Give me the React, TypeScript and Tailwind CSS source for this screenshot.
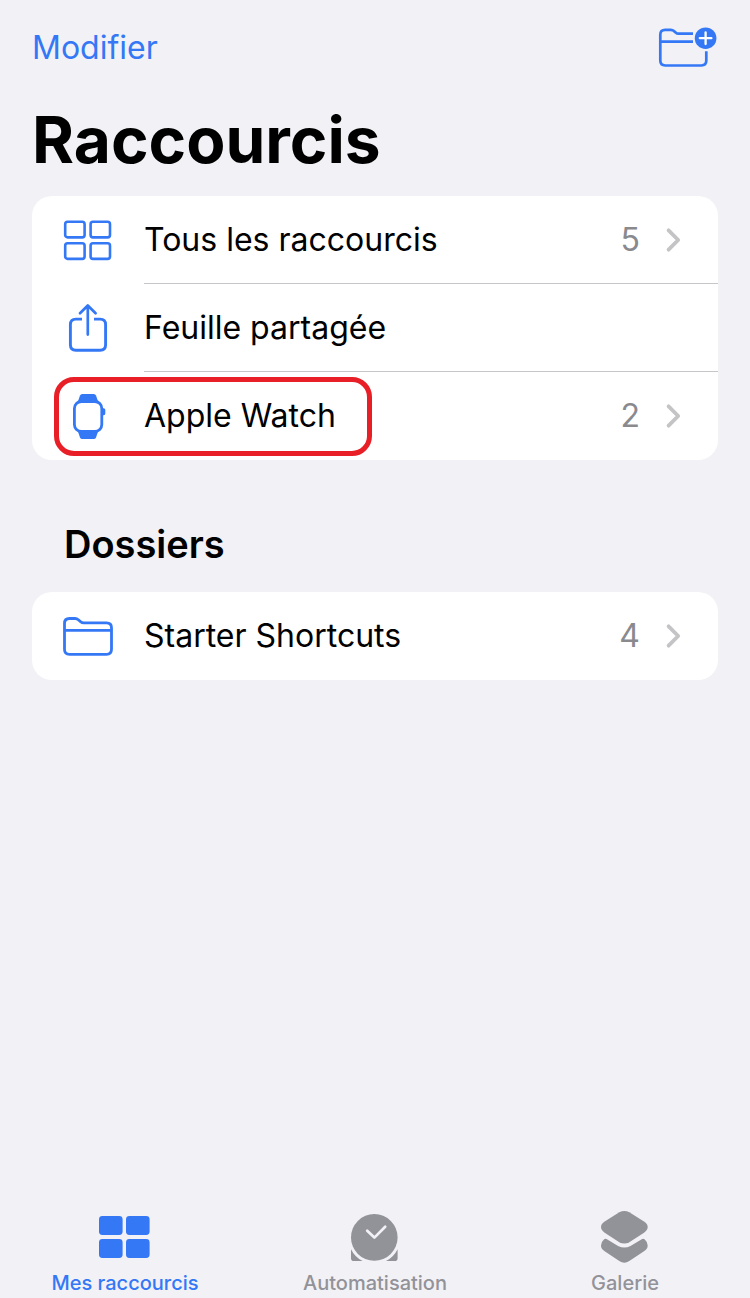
import React from 'react';

type IconProps = { className?: string };

const iconClass = 'h-14 w-14 shrink-0';

const GridIcon = ({ className = iconClass }: IconProps) => (
  <svg viewBox="0 0 56 56" className={className} fill="none" stroke="currentColor" strokeWidth="2.6" aria-hidden="true">
    <rect x="5.2" y="9.8" width="19.4" height="15.6" rx="2.4" />
    <rect x="30.6" y="9.8" width="19.4" height="15.6" rx="2.4" />
    <rect x="5.2" y="31.3" width="19.4" height="15.6" rx="2.4" />
    <rect x="30.6" y="31.3" width="19.4" height="15.6" rx="2.4" />
  </svg>
);

const ShareIcon = ({ className = iconClass }: IconProps) => (
  <svg viewBox="0 0 56 56" className={className} fill="none" stroke="currentColor" strokeWidth="2.9" aria-hidden="true">
    <path d="M22 19.1h-6.1q-5.5 0-5.5 5.5v20.2q0 5.5 5.5 5.5h24.2q5.5 0 5.5-5.5V24.6q0-5.5-5.5-5.5H34" />
    <path d="M27.8 5.5V34.6M20 13.3l7.8-7.8 7.8 7.8" strokeWidth="2.7" strokeLinecap="round" strokeLinejoin="round" />
  </svg>
);

const WatchIcon = ({ className = iconClass }: IconProps) => (
  <svg viewBox="0 0 56 56" className={className} aria-hidden="true">
    <g fill="currentColor">
      <path d="M20 7.6Q20.6 6 22.4 6h11.2q1.8 0 2.4 1.6l2.4 6.9H17.6z" />
      <path d="M20 49.4q.6 1.6 2.4 1.6h11.2q1.8 0 2.4-1.6l2.4-6.9H17.6z" />
      <path d="M42 20.2h1.6q1.7 0 1.7 1.7v3.6q0 1.7-1.7 1.7H42z" />
    </g>
    <rect x="14.4" y="13.5" width="27.4" height="30" rx="7" fill="#fff" stroke="currentColor" strokeWidth="2.8" />
  </svg>
);

const FolderIcon = ({ className = iconClass }: IconProps) => (
  <svg viewBox="0 0 56 56" className={className} fill="none" stroke="currentColor" strokeWidth="2.8" strokeLinejoin="round" aria-hidden="true">
    <path d="M4.5 41.3V15.5q0-5 5-5h5.6q1.8 0 3.2 1.2l2.2 1.9q1.5 1.2 3.3 1.2h22.7q5 0 5 5v21.5q0 5-5 5h-37q-5 0-5-5z" />
    <path d="M4.5 22.4h47" />
  </svg>
);

const FolderPlusIcon = ({ className }: IconProps) => (
  <svg viewBox="0 0 60 44" className={className} fill="none" stroke="currentColor" strokeWidth="2.7" aria-hidden="true">
    <path d="M35 7.6H20.6q-1.7 0-3-1.2l-1.6-1.3q-1.4-1.2-3.2-1.2H7.2q-4.9 0-4.9 4.9v25.8q0 4.9 4.9 4.9h36.2q4.9 0 4.9-4.9v-9.3M2.3 15.7H35" />
    <circle cx="47.6" cy="12.2" r="10.8" fill="currentColor" stroke="none" />
    <path d="M47.6 6.4v11.6M41.8 12.2h11.6" stroke="#fff" strokeWidth="2.3" strokeLinecap="round" />
  </svg>
);

const ChevronIcon = () => (
  <svg viewBox="0 0 18 28" className="h-7 w-[18px] text-[#c4c4c6]" fill="none" stroke="currentColor" strokeWidth="3.8" strokeLinecap="round" strokeLinejoin="round" aria-hidden="true">
    <path d="M4.6 4.3l9.6 9.7-9.6 9.7" />
  </svg>
);

const GridFilledIcon = () => (
  <svg viewBox="0 0 56 56" className={iconClass} fill="currentColor" aria-hidden="true">
    <rect x="2" y="7" width="23.6" height="19" rx="3.4" />
    <rect x="29" y="7" width="23.6" height="19" rx="3.4" />
    <rect x="2" y="30" width="23.6" height="19" rx="3.4" />
    <rect x="29" y="30" width="23.6" height="19" rx="3.4" />
  </svg>
);

const ClockIcon = () => (
  <svg viewBox="0 0 56 56" className={iconClass} fill="currentColor" aria-hidden="true">
    <circle cx="27.3" cy="28.4" r="23.3" />
    <path d="M4 40.2A26 26 0 0 0 15.6 52H6.8Q4 52 4 49.2zM50.6 40.2A26 26 0 0 1 39 52h8.8q2.8 0 2.8-2.8z" />
    <path d="M20.2 21.8l7.2 6.8 10.8-10.8" fill="none" stroke="#f2f1f6" strokeWidth="2.7" strokeLinecap="round" strokeLinejoin="round" />
  </svg>
);

const LayersIcon = () => (
  <svg viewBox="0 0 56 56" className={iconClass} fill="currentColor" aria-hidden="true">
    <path d="M22.3 3.2q5-2.6 10 0L47 12.6q3.7 2.4 3.7 5.4T47 23.7L32.3 33.2q-5 2.8-10 0L7.7 23.7Q4 21 4 18t3.7-5.4z" />
    <path d="M9.5 29.9q-1.5-.6-2.6.7Q4 33.2 4 36.4q0 3.4 3.7 5.8l14.6 9.9q5 3.2 10 0L47 42.2q3.7-2.4 3.7-5.8 0-3.2-2.9-5.8-1.1-1.3-2.6-.7L33.5 37q-6.2 3-12.4 0z" />
  </svg>
);

type RowProps = {
  icon: React.ReactNode;
  label: string;
  count?: number;
  highlighted?: boolean;
};

const ShortcutRow = ({ icon, label, count, highlighted }: RowProps) => (
  <li className="group flex h-22 flex-col">
    <button type="button" className="flex w-full flex-1 items-center justify-between pr-9 pl-7 text-left">
      <span className="relative flex items-center gap-7 self-stretch">
        <span className="text-[#3478f6]">{icon}</span>
        <span>{label}</span>
        {highlighted && (
          <span className="pointer-events-none absolute top-[5px] -right-9 bottom-1 -left-1.5 rounded-[20px] border-5 border-[#e81f27]" />
        )}
      </span>
      {count !== undefined && (
        <span className="flex items-center gap-6 text-[#8a8a8e]">
          {count}
          <ChevronIcon />
        </span>
      )}
    </button>
    <div className="ml-28 h-px bg-[#c6c6c8] group-last:hidden" />
  </li>
);

const tabs = [
  { label: 'Mes raccourcis', icon: <GridFilledIcon />, active: true },
  { label: 'Automatisation', icon: <ClockIcon />, active: false },
  { label: 'Galerie', icon: <LayersIcon />, active: false }
];

const App = () => {
  return (
    <div className="flex min-h-screen flex-col bg-[#f2f1f6] font-['Inter',sans-serif] text-[32px] leading-10 text-black">
      <header className="flex h-24 items-center justify-between px-8">
        <button type="button" className="text-[#3478f6]">Modifier</button>
        <button type="button" aria-label="Nouveau dossier" className="text-[#3478f6]">
          <FolderPlusIcon className="h-11 w-15" />
        </button>
      </header>

      <main className="flex-1 px-8">
        <h1 className="pt-1 pb-4 text-[64px] leading-20 font-bold">Raccourcis</h1>
        <ul className="rounded-[20px] bg-white">
          <ShortcutRow icon={<GridIcon />} label="Tous les raccourcis" count={5} />
          <ShortcutRow icon={<ShareIcon />} label="Feuille partagée" />
          <ShortcutRow icon={<WatchIcon />} label="Apple Watch" count={2} highlighted />
        </ul>

        <h2 className="px-8 pt-15 pb-6 text-[38px] leading-12 font-semibold">Dossiers</h2>
        <ul className="rounded-[20px] bg-white">
          <ShortcutRow icon={<FolderIcon />} label="Starter Shortcuts" count={4} />
        </ul>
      </main>

      <nav className="grid grid-cols-3 pb-px">
        {tabs.map((tab) => (
          <button
            key={tab.label}
            type="button"
            aria-current={tab.active ? 'page' : undefined}
            className={`flex flex-col items-center gap-1 text-[20px] leading-7 font-medium ${
              tab.active ? 'text-[#3478f6]' : 'text-[#929299]'
            }`}
          >
            {tab.icon}
            {tab.label}
          </button>
        ))}
      </nav>
    </div>
  );
};

export default App;
